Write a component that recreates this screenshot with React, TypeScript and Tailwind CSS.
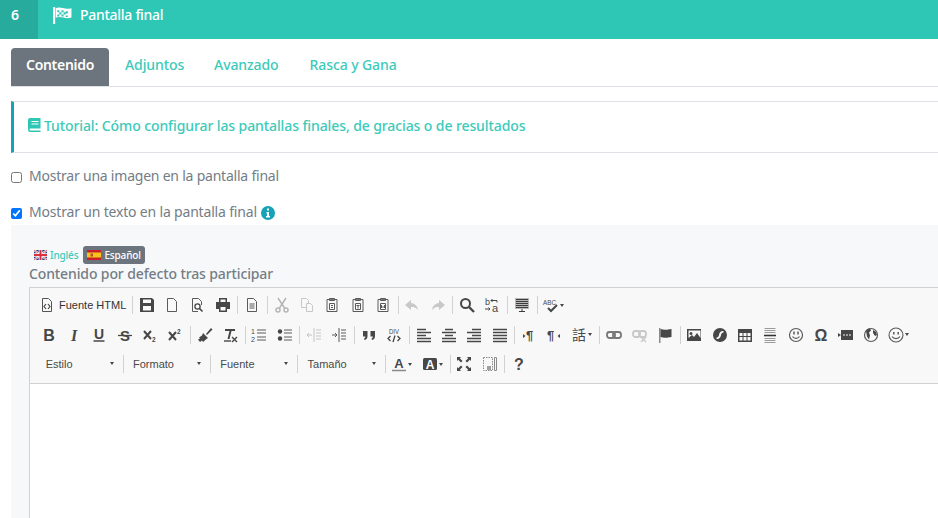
import type { ReactNode } from 'react';

const plex = '[font-family:"Noto_Sans",sans-serif]';

// toolbar glyphs drawn on a 16x16 grid
const clip = (
  <>
    <path d="M5 2.500H3v12h10v-12h-2" fill="none" stroke="#5a5a5a" />
    <path d="M5.500 1.500h5v2h-5z" fill="#777" stroke="#5a5a5a" />
  </>
);

const icons: Record<string, ReactNode> = {
  source: (
    <>
      <path d="M3.500 1.500h6l3 3v10h-9z" fill="none" stroke="#555" />
      <path d="M7 7 5 9.500 7 12M9 7l2 2.500L9 12" fill="none" stroke="#474747" strokeWidth="1.200" />
    </>
  ),
  save: <path fillRule="evenodd" d="M1 1h12l2 2v12H1zM4 2.500V6h8V2.500zM4 9v4.500h8V9z" />,
  newpage: <path d="M3.500 1.500h6l3 3v10h-9z" fill="none" stroke="#5a5a5a" />,
  preview: (
    <>
      <path d="M9 14.500H3.500v-13h6l3 3V8" fill="none" stroke="#5a5a5a" />
      <circle cx="8.500" cy="9.500" r="2.600" fill="none" stroke="#474747" strokeWidth="1.300" />
      <path d="m10.500 11.500 3 3" stroke="#474747" strokeWidth="1.600" />
    </>
  ),
  print: <path fillRule="evenodd" d="M4 1h8v4h3v7h-3v3H4v-3H1V5h3zM5.500 2.500V5h5V2.500zM5.500 10v3.500h5V10z" />,
  templates: (
    <>
      <path d="M3.500 1.500h6l3 3v10h-9z" fill="none" stroke="#5a5a5a" />
      <path d="M5.500 7h5M5.500 9h5M5.500 11h5" stroke="#5a5a5a" />
    </>
  ),
  cut: (
    <g fill="none" stroke="#b5b5b5" strokeWidth="1.500">
      <path d="M4 1l6.500 10M12 1 5.500 11" />
      <circle cx="4" cy="13" r="2" />
      <circle cx="12" cy="13" r="2" />
    </g>
  ),
  copy: (
    <g fill="none" stroke="#c8c8c8">
      <path d="M2.500 1.500h5l2 2v7h-7z" />
      <path d="M7.500 6.500h4l2 2v6h-6z" fill="#f8f8f8" />
    </g>
  ),
  paste: (
    <>
      {clip}
      <path d="M5.500 6.500h5v6h-5zM7 8.500h2M7 10.500h2" fill="none" stroke="#5a5a5a" />
    </>
  ),
  pasteText: (
    <>
      {clip}
      <path d="M5.500 6.500h5v6h-5zM6.500 8.500h3M8 8.500v3" fill="none" stroke="#5a5a5a" />
    </>
  ),
  pasteWord: (
    <>
      {clip}
      <path d="M5.500 6.500h5v6h-5zM6.500 8v3l1.500-1.500L9.500 11V8" fill="none" stroke="#5a5a5a" />
    </>
  ),
  undo: <path fill="#c8c8c8" d="M7 3 1 8l6 5v-3c3 0 5 .5 7 3-.5-4-3-6.500-7-7z" />,
  redo: <path fill="#c8c8c8" d="m9 3 6 5-6 5v-3c-3 0-5 .5-7 3 .5-4 3-6.500 7-7z" />,
  find: (
    <g fill="none" stroke="#474747">
      <circle cx="6.500" cy="6.500" r="4.500" strokeWidth="2" />
      <path d="m10 10 5 5" strokeWidth="2.400" />
    </g>
  ),
  replace: (
    <>
      <text x="1" y="7.500" fontSize="9" fontFamily="Liberation Sans" fill="#474747">b</text>
      <text x="8" y="15" fontSize="11" fontFamily="Liberation Sans" fill="#474747">a</text>
      <path d="M7 3.500h6v2M7 3.500 8.500 2M7 3.500 8.500 5M1 12h5M4.500 10.500 6 12l-1.500 1.500" fill="none" stroke="#474747" />
    </>
  ),
  selectAll: (
    <>
      <path fill="#b8b8b8" d="M1 1h14v11H1z" />
      <path stroke="#3c3c3c" d="M2 2.500h12M2 4.500h12M2 6.500h12M2 8.500h12M2 10.500h12M5 14.500h6M8 12v3" />
    </>
  ),
  spell: (
    <>
      <text x="0" y="7.500" fontSize="8" fontFamily="Liberation Sans" fill="#474747" textLength="13" lengthAdjust="spacingAndGlyphs">ABC</text>
      <path d="m5 11 3 3 6-6" fill="none" stroke="#474747" strokeWidth="2" />
    </>
  ),
  bold: <text x="8" y="13.500" textAnchor="middle" fontSize="16" fontWeight="700" fontFamily="Liberation Sans" fill="#474747">B</text>,
  italic: <text x="8" y="13.500" textAnchor="middle" fontSize="16" fontWeight="700" fontStyle="italic" fontFamily="Liberation Serif" fill="#474747">I</text>,
  underline: (
    <>
      <text x="8" y="11.500" textAnchor="middle" fontSize="14" fontWeight="700" fontFamily="Liberation Sans" fill="#474747">U</text>
      <path d="M2.500 14h11" stroke="#474747" strokeWidth="1.500" />
    </>
  ),
  strike: (
    <>
      <text x="8" y="13.500" textAnchor="middle" fontSize="15" fontWeight="700" fontFamily="Liberation Sans" fill="#474747">S</text>
      <path d="M1 8.500h14" stroke="#474747" strokeWidth="1.300" />
    </>
  ),
  sub: (
    <>
      <path d="m2 4 7 8M9 4l-7 8" stroke="#474747" strokeWidth="2" />
      <text x="10" y="15" fontSize="6.500" fontWeight="700" fontFamily="Liberation Sans" fill="#474747">2</text>
    </>
  ),
  sup: (
    <>
      <path d="m2 5 7 8M9 5l-7 8" stroke="#474747" strokeWidth="2" />
      <text x="10" y="7" fontSize="6.500" fontWeight="700" fontFamily="Liberation Sans" fill="#474747">2</text>
    </>
  ),
  brush: (
    <>
      <path d="m9 7 5-6 1.500 1.500L10 8z" />
      <path d="M6 6l5 5-1.500 1L6 15l-1-1.500L3 15l-2-2.500 2-1-1-1 3-2z" />
    </>
  ),
  clear: (
    <>
      <path d="M3 2h10v2H9.500l-2 8h-2l2-8H3z" />
      <path d="M2 14h7" stroke="#474747" strokeWidth="1.400" />
      <path d="m10 10 5 5M15 10l-5 5" stroke="#474747" strokeWidth="1.400" />
    </>
  ),
  ol: (
    <>
      <text x="0" y="7" fontSize="7" fontFamily="Liberation Sans" fill="#474747">1</text>
      <text x="0" y="15" fontSize="7" fontFamily="Liberation Sans" fill="#474747">2</text>
      <path d="M6 3h9M6 6h9M6 10h9M6 13h9" stroke="#5a5a5a" />
    </>
  ),
  ul: (
    <>
      <circle cx="3" cy="4.500" r="2.200" />
      <circle cx="3" cy="11.500" r="2.200" />
      <path d="M7 3h8M7 6h8M7 10h8M7 13h8" stroke="#5a5a5a" />
    </>
  ),
  outdent: <path d="M1 8h5M3 6 1 8l2 2M8 1v14M10 3h5M10 6h5M10 9h5M10 12h5" fill="none" stroke="#c4c4c4" />,
  indent: <path d="M1 8h5M4 6l2 2-2 2M8 1v14M10 3h5M10 6h5M10 9h5M10 12h5" fill="none" stroke="#5a5a5a" />,
  quote: <path d="M2 4h4.500v5c0 2.500-1 3.500-3 4L3 11.500c1-.3 1.300-1 1.300-2H2zM9.500 4H14v5c0 2.500-1 3.500-3 4l-.5-1.500c1-.3 1.300-1 1.300-2H9.500z" />,
  div: (
    <>
      <text x="8" y="7" textAnchor="middle" fontSize="8" fontFamily="Liberation Sans" fill="#474747" textLength="10" lengthAdjust="spacingAndGlyphs">DIV</text>
      <path d="M4.500 9 2 11.500 4.500 14M11.500 9 14 11.500 11.500 14M9 8.500 7 15" fill="none" stroke="#474747" strokeWidth="1.300" />
    </>
  ),
  left: <path d="M1 2.500h9M1 5.500h14M1 8.500h9M1 11.500h14M1 14.500h14" stroke="#474747" strokeWidth="1.500" />,
  center: <path d="M4 2.500h8M1 5.500h14M4 8.500h8M1 11.500h14M1 14.500h14" stroke="#474747" strokeWidth="1.500" />,
  right: <path d="M6 2.500h9M1 5.500h14M6 8.500h9M1 11.500h14M1 14.500h14" stroke="#474747" strokeWidth="1.500" />,
  justify: <path d="M1 2.500h14M1 5.500h14M1 8.500h14M1 11.500h14M1 14.500h14" stroke="#474747" strokeWidth="1.500" />,
  ltr: (
    <>
      <path d="M2 7l2.500 2L2 11z" />
      <text x="5" y="13" fontSize="13" fontWeight="700" fontFamily="Liberation Sans" fill="#474747">¶</text>
    </>
  ),
  rtl: (
    <>
      <text x="1" y="13" fontSize="13" fontWeight="700" fontFamily="Liberation Sans" fill="#474747">¶</text>
      <path d="M14 7l-2.500 2 2.500 2z" />
    </>
  ),
  lang: <text x="8" y="13" textAnchor="middle" fontSize="14" fontFamily="Noto Sans CJK SC" fill="#474747">話</text>,
  link: (
    <g fill="none" stroke="#777" strokeWidth="1.800">
      <rect x="1" y="5" width="8" height="6" rx="2.500" />
      <rect x="7" y="5" width="8" height="6" rx="2.500" />
    </g>
  ),
  unlink: (
    <>
      <g fill="none" stroke="#c8c8c8" strokeWidth="1.800">
        <rect x="1" y="4" width="7" height="6" rx="2.500" />
        <rect x="7" y="4" width="7" height="6" rx="2.500" />
      </g>
      <path d="m9 10 5 5M14 10l-5 5" stroke="#c8c8c8" strokeWidth="1.300" />
    </>
  ),
  anchor: (
    <>
      <path d="M2 1h1.500v15H2z" fill="#8a8a8a" />
      <path d="M3.500 2c3 1 6 1 11 0v8c-5 1-8 1-11 0z" />
    </>
  ),
  image: <path fillRule="evenodd" d="M1 2h14v12H1zM2.500 3.500V11L6 8l2 2 3-4 3.500 5V3.500zM5 5a1.500 1.500 0 1 1 0 3 1.500 1.500 0 0 1 0-3z" />,
  flash: <path fillRule="evenodd" d="M8 1a7 7 0 1 1 0 14A7 7 0 0 1 8 1zm3.500 3C8 4 7.500 6 7 8c-.3 1.500-1 2.500-2.500 2.500V12C8 12 8.500 10 9 8c.3-1.500 1-2.500 2.500-2.500z" />,
  table: <path fillRule="evenodd" d="M1 2h14v13H1zM2.500 6v3h3V6zm4 0v3h3V6zm4 0v3h3V6zm-8 4v3.500h3V10zm4 0v3.500h3V10zm4 0v3.500h3V10z" />,
  hr: (
    <>
      <path d="M2.500 1.500h11M2.500 3.500h11M2.500 5.500h11M2.500 11.500h11M2.500 13.500h11M2.500 15.500h11" stroke="#9a9a9a" />
      <path d="M2 8.500h12" stroke="#333" strokeWidth="1.600" />
    </>
  ),
  smiley: (
    <g fill="none" stroke="#5a5a5a" strokeWidth="1.200">
      <circle cx="8" cy="8" r="6.500" />
      <path d="M4.500 9.500c1.500 2.500 5.500 2.500 7 0" />
      <path d="M6 4.500v3M10 4.500v3" strokeWidth="1.500" />
    </g>
  ),
  omega: <text x="8" y="14" textAnchor="middle" fontSize="16" fontWeight="700" fontFamily="Liberation Sans" fill="#474747">Ω</text>,
  iframe: (
    <>
      <path d="M0 6l3 2-3 2z" />
      <path fillRule="evenodd" d="M3 3h12v10H3zM5 7.500v1h2v-1zm3 0v1h2v-1zm3 0v1h2v-1z" />
    </>
  ),
  globe: (
    <>
      <circle cx="8" cy="8" r="6.500" fill="none" stroke="#5a5a5a" strokeWidth="1.200" />
      <path d="M3 4c1-2 3-2.500 4-2.500l1 2-2 2 1 3-1 4-2-3zM10 3l3 2 1 3-2 1-2-3z" />
    </>
  ),
  emoji: (
    <g fill="none" stroke="#5a5a5a" strokeWidth="1.100">
      <circle cx="8" cy="8" r="7" />
      <path d="M4 9.500c1.500 2.800 6.500 2.800 8 0" />
      <path d="M5.800 5v2.500M10.200 5v2.500" strokeWidth="1.500" />
    </g>
  ),
  maximize: <path d="M1 1h4L3.800 2.200 6.500 5 5 6.500 2.200 3.800 1 5zM15 1v4l-1.200-1.200L11 6.500 9.500 5l2.700-2.800L11 1zM1 15v-4l1.200 1.200L5 9.500 6.500 11l-2.700 2.800L5 15zM15 15h-4l1.200-1.200L9.500 11 11 9.500l2.800 2.700L15 11z" />,
  blocks: (
    <g fill="none" stroke="#8a8a8a">
      <path strokeDasharray="1.500 1" d="M1.500 1.500h9v13h-9z" />
      <path d="M12.500 1.500h2v13h-2z" />
      <path d="M5 11h4M5 13h4" stroke="#474747" />
    </g>
  ),
  help: <text x="8" y="14" textAnchor="middle" fontSize="16" fontWeight="700" fontFamily="Liberation Sans" fill="#474747">?</text>,
  textColor: (
    <>
      <text x="8" y="11.500" textAnchor="middle" fontSize="13" fontWeight="700" fontFamily="Liberation Sans" fill="#474747">A</text>
      <path d="M1 14.500h14" stroke="#8a8a8a" strokeWidth="1.500" />
    </>
  ),
  bgColor: (
    <>
      <rect x="1" y="2" width="14" height="12" rx="1.500" fill="#474747" />
      <text x="8" y="12.500" textAnchor="middle" fontSize="12" fontWeight="700" fontFamily="Liberation Sans" fill="#fff">A</text>
    </>
  ),
};

function Icon({ name }: { name: string }) {
  return (
    <svg className="overflow-visible" width="16" height="16" viewBox="0 0 16 16" fill="#474747">
      {icons[name]}
    </svg>
  );
}

function Btn({ name }: { name: string }) {
  return (
    <span className="flex h-[22px] w-[25.3px] shrink-0 items-center justify-center">
      <Icon name={name} />
    </span>
  );
}

function Arrow() {
  return <span className="h-0 w-0 border-x-[2.5px] border-t-[3px] border-x-transparent border-t-[#474747]" />;
}

function DropBtn({ name }: { name: string }) {
  return (
    <span className="flex h-[22px] w-[30.4px] shrink-0 items-center gap-px pl-[4.4px]">
      <Icon name={name} />
      <Arrow />
    </span>
  );
}

function Sep() {
  return <span className="ml-[2px] mr-[1.2px] h-[18px] w-px shrink-0 bg-[#d1d1d1]" />;
}

function Combo({ label }: { label: string }) {
  return (
    <span className="flex h-[22px] w-[83.1px] shrink-0 items-center justify-between pb-px pl-[8px] pr-[7px] text-[11px] text-[#484848]">
      {label}
      <Arrow />
    </span>
  );
}

function Row({ children }: { children: ReactNode }) {
  return <div className="flex h-[29.5px] items-center">{children}</div>;
}

function Toolbar() {
  return (
    <div className="h-[96px] border-b border-[#d1d1d1] bg-[#f8f8f8] pl-[6px] pt-[2.5px] font-['Liberation_Sans',sans-serif]">
      <Row>
        <span className="flex h-[22px] w-[94px] shrink-0 items-center gap-[4px] pl-[3px] text-[11px] text-[#333]">
          <Icon name="source" />
          Fuente HTML
        </span>
        <Sep />
        <Btn name="save" />
        <Btn name="newpage" />
        <Btn name="preview" />
        <Btn name="print" />
        <Sep />
        <Btn name="templates" />
        <Sep />
        <Btn name="cut" />
        <Btn name="copy" />
        <Btn name="paste" />
        <Btn name="pasteText" />
        <Btn name="pasteWord" />
        <Sep />
        <Btn name="undo" />
        <Btn name="redo" />
        <Sep />
        <Btn name="find" />
        <Btn name="replace" />
        <Sep />
        <Btn name="selectAll" />
        <Sep />
        <DropBtn name="spell" />
      </Row>
      <Row>
        <Btn name="bold" />
        <Btn name="italic" />
        <Btn name="underline" />
        <Btn name="strike" />
        <Btn name="sub" />
        <Btn name="sup" />
        <Sep />
        <Btn name="brush" />
        <Btn name="clear" />
        <Sep />
        <Btn name="ol" />
        <Btn name="ul" />
        <Sep />
        <Btn name="outdent" />
        <Btn name="indent" />
        <Sep />
        <Btn name="quote" />
        <Btn name="div" />
        <Sep />
        <Btn name="left" />
        <Btn name="center" />
        <Btn name="right" />
        <Btn name="justify" />
        <Sep />
        <Btn name="ltr" />
        <Btn name="rtl" />
        <DropBtn name="lang" />
        <Sep />
        <Btn name="link" />
        <Btn name="unlink" />
        <Btn name="anchor" />
        <Sep />
        <Btn name="image" />
        <Btn name="flash" />
        <Btn name="table" />
        <Btn name="hr" />
        <Btn name="smiley" />
        <Btn name="omega" />
        <Btn name="iframe" />
        <Btn name="globe" />
        <DropBtn name="emoji" />
      </Row>
      <Row>
        <span className="w-[1.7px] shrink-0" />
        <Combo label="Estilo" />
        <Sep />
        <Combo label="Formato" />
        <Sep />
        <Combo label="Fuente" />
        <Sep />
        <Combo label="Tamaño" />
        <Sep />
        <DropBtn name="textColor" />
        <DropBtn name="bgColor" />
        <Sep />
        <Btn name="maximize" />
        <Btn name="blocks" />
        <Sep />
        <Btn name="help" />
      </Row>
    </div>
  );
}

function UkFlag() {
  return (
    <svg width="13" height="10" viewBox="0 0 13 10">
      <path fill="#2b3f86" d="M0 0h13v10H0z" />
      <path stroke="#fff" strokeWidth="2" d="m0 0 13 10M13 0 0 10" />
      <path stroke="#d8303c" strokeWidth=".8" d="m0 0 13 10M13 0 0 10" />
      <path stroke="#fff" strokeWidth="3.600" d="M6.500 0v10M0 5h13" />
      <path stroke="#d8303c" strokeWidth="2" d="M6.500 0v10M0 5h13" />
    </svg>
  );
}

function EsFlag() {
  return (
    <svg width="14" height="10" viewBox="0 0 14 10">
      <path fill="#c8202a" d="M0 0h14v10H0z" />
      <path fill="#f6c21c" d="M0 2.500h14v5H0z" />
      <path fill="#b5502a" d="M3.500 3.500H6v3H3.500z" />
    </svg>
  );
}

export default function App() {
  return (
    <div className={`h-[518px] w-[938px] overflow-hidden bg-white text-[14px] ${plex}`}>
      <header className="flex h-[39px] items-center bg-[#2ec7b6] text-white">
        <div className="flex h-full w-[38px] items-center bg-[#27ab9d] pb-[10px] pl-[11px] font-semibold">6</div>
        <svg className="mb-[8px] ml-[14px]" width="20" height="19" viewBox="0 0 19 18" fill="#fff">
          <path d="M1 1h2v16H1z" />
          <path fillRule="evenodd" d="M3.500 2c5-2 8 2 15 0v9c-6 2-9-2-15 0zM5 4v2h2V4zm4 0v2h2V4zm4 1v2h2V5zM7 6v2h2V6zm4 0v2h2V6zM5 8v2h2V8zm4 0v2h2V8zm4 1v1.500h2V9z" />
        </svg>
        <span className="mb-[10px] ml-[8px] text-[14px] font-medium tracking-[-0.02em]">Pantalla final</span>
      </header>

      <div className="px-[11px]">
        <nav className="mr-[-11px] mt-[9px] flex h-[39px] items-stretch border-b border-[#dee2e6] text-[14px] font-medium tracking-[-0.1px] text-[#3ccaba]">
          <span className="flex w-[98px] items-center justify-center rounded-t-[4px] bg-[#6c757d] pb-[5px] font-semibold tracking-[-0.3px] text-white">Contenido</span>
          <span className="flex items-center pb-[5px] pl-[16px] pr-[15px]">Adjuntos</span>
          <span className="flex items-center px-[15px] pb-[5px]">Avanzado</span>
          <span className="flex items-center px-[16px] pb-[5px]">Rasca y Gana</span>
        </nav>

        <div className="mr-[-11px] mt-[14px] flex h-[52px] items-center border-y border-l-[3px] border-[#dee2e6] border-l-[#17a2b8] pb-[4px] pl-[14px] text-[#3ccaba]">
          <svg width="13" height="14" viewBox="0 0 13 14" fill="#2ec7b6">
            <path fillRule="evenodd" d="M2 0h10.500v10.500H2.500a1 1 0 0 0 0 2h10V14H2a2 2 0 0 1-2-2V2a2 2 0 0 1 2-2zm1.500 3v1h7V3zm0 2.500v1h7v-1z" />
          </svg>
          <span className="ml-[3px] font-medium tracking-[-0.1px]">Tutorial: Cómo configurar las pantallas finales, de gracias o de resultados</span>
        </div>

        <label className="mt-[14px] flex h-[20px] items-center text-[#747d85]">
          <input type="checkbox" className="m-0 h-[11px] w-[11px]" />
          <span className="ml-[7px] pb-[4px] tracking-[-0.22px]">Mostrar una imagen en la pantalla final</span>
        </label>

        <label className="mt-[16px] flex h-[20px] items-center text-[#747d85]">
          <input type="checkbox" defaultChecked className="m-0 h-[11px] w-[11px]" />
          <span className="ml-[7px] pb-[4px] tracking-[-0.18px]">Mostrar un texto en la pantalla final</span>
          <svg className="mb-[1px] ml-[4px]" width="14" height="14" viewBox="0 0 14 14">
            <circle cx="7" cy="7" r="7" fill="#17a2b8" />
            <path fill="#fff" d="M6 2.500h2v2H6zM5.500 6H8v4h1v1.500H5V10h1V7.500h-.5z" />
          </svg>
        </label>

        <section className="mr-[-11px] mt-[2px] h-[300px] bg-[#f7f8fa] pl-[18px] pt-[21px]">
          <div className="flex h-[18px] items-center text-[10px] font-medium tracking-[-0.15px]">
            <span className="ml-[5px]"><UkFlag /></span>
            <span className="ml-[3px] text-[#3ccaba]">Inglés</span>
            <span className="ml-[5px] flex h-[18px] items-center gap-[3px] rounded-[3px] bg-[#6c757d] px-[4px] text-white">
              <EsFlag />
              Español
            </span>
          </div>
          <div className="mt-[1px] h-[20px] text-[14px] font-medium leading-[17px] tracking-[-0.12px] text-[#747d85]">Contenido por defecto tras participar</div>
          <div className="mt-[2px] h-[300px] border-l border-t border-[#d1d1d1] bg-white">
            <Toolbar />
          </div>
        </section>
      </div>
    </div>
  );
}
